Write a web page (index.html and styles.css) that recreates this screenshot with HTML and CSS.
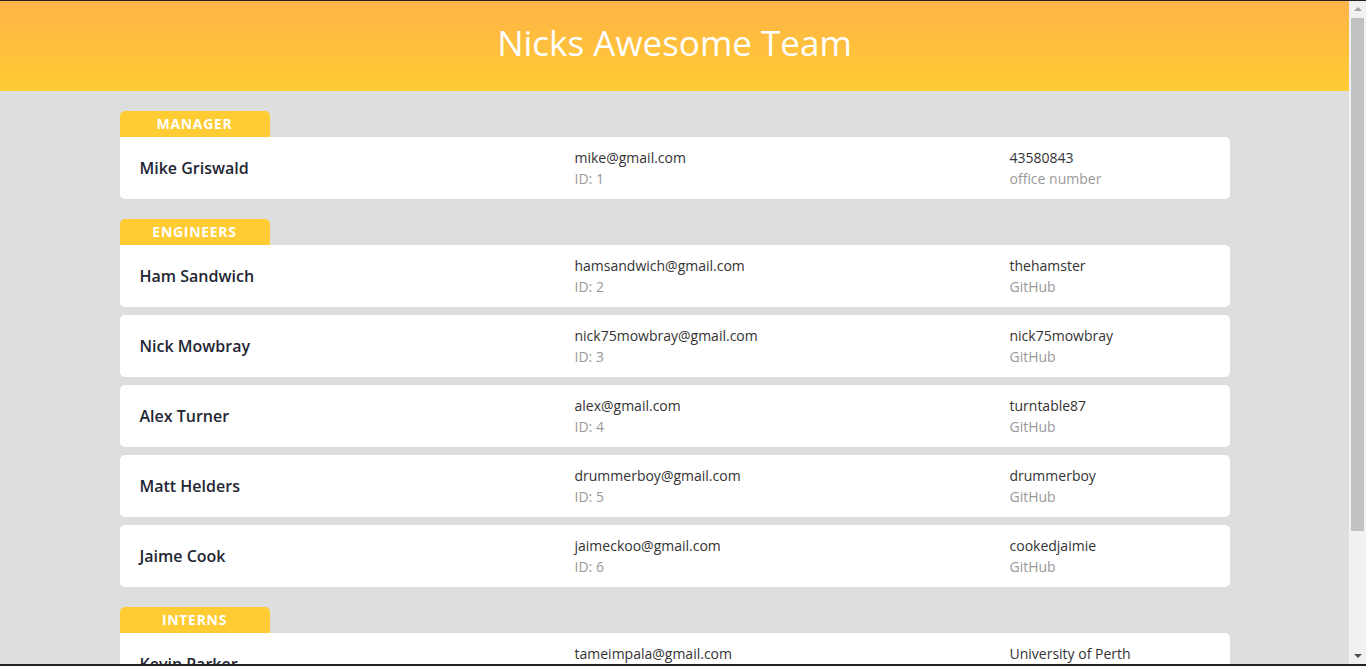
FILE: index.html
```html
<!DOCTYPE html>
<html lang="en">
<head>
<meta charset="utf-8">
<title>Nicks Awesome Team</title>
<link rel="stylesheet" href="styles.css">
</head>
<body>
<div class="frame-top"></div>
<div class="scrollbar">
  <div class="sb-arrow sb-up"></div>
  <div class="sb-thumb"></div>
  <div class="sb-arrow sb-down"></div>
</div>
<div class="page">
  <header class="hero">
    <h1 class="hero-title">Nicks Awesome Team</h1>
  </header>
  <main class="container">
    <section class="group">
      <div class="badge">Manager</div>
      <div class="card first">
        <div class="name">Mike Griswald</div>
        <div class="col"><div class="main">mike@gmail.com</div><div class="sub">ID: 1</div></div>
        <div class="col"><div class="main">43580843</div><div class="sub">office number</div></div>
      </div>
    </section>
    <section class="group">
      <div class="badge">Engineers</div>
      <div class="card first">
        <div class="name">Ham Sandwich</div>
        <div class="col"><div class="main">hamsandwich@gmail.com</div><div class="sub">ID: 2</div></div>
        <div class="col"><div class="main">thehamster</div><div class="sub">GitHub</div></div>
      </div>
      <div class="card">
        <div class="name">Nick Mowbray</div>
        <div class="col"><div class="main">nick75mowbray@gmail.com</div><div class="sub">ID: 3</div></div>
        <div class="col"><div class="main">nick75mowbray</div><div class="sub">GitHub</div></div>
      </div>
      <div class="card">
        <div class="name">Alex Turner</div>
        <div class="col"><div class="main">alex@gmail.com</div><div class="sub">ID: 4</div></div>
        <div class="col"><div class="main">turntable87</div><div class="sub">GitHub</div></div>
      </div>
      <div class="card">
        <div class="name">Matt Helders</div>
        <div class="col"><div class="main">drummerboy@gmail.com</div><div class="sub">ID: 5</div></div>
        <div class="col"><div class="main">drummerboy</div><div class="sub">GitHub</div></div>
      </div>
      <div class="card">
        <div class="name">Jaime Cook</div>
        <div class="col"><div class="main">jaimeckoo@gmail.com</div><div class="sub">ID: 6</div></div>
        <div class="col"><div class="main">cookedjaimie</div><div class="sub">GitHub</div></div>
      </div>
    </section>
    <section class="group">
      <div class="badge">Interns</div>
      <div class="card first">
        <div class="name">Kevin Parker</div>
        <div class="col"><div class="main">tameimpala@gmail.com</div><div class="sub">ID: 7</div></div>
        <div class="col"><div class="main">University of Perth</div><div class="sub">school</div></div>
      </div>
    </section>
  </main>
</div>
<div class="frame-bottom"></div>
</body>
</html>
```

FILE: styles.css
```css
* { box-sizing: border-box; }
html, body { margin: 0; padding: 0; }
body {
  background: #dedede;
  font-family: "Open Sans", "Liberation Sans", sans-serif;
  color: #212529;
}
.frame-top {
  position: fixed; top: 0; left: 0; right: 0; height: 1px;
  background: #222; z-index: 10;
}
.frame-bottom {
  position: fixed; bottom: 0; left: 0; right: 0; height: 2px;
  background: #222; z-index: 10;
}
.scrollbar {
  position: fixed; top: 1px; right: 0; bottom: 2px; width: 17px;
  background: #f1f1f1; z-index: 9;
  display: flex; flex-direction: column; align-items: center;
}
.sb-arrow {
  width: 0; height: 0;
  border-left: 4px solid transparent;
  border-right: 4px solid transparent;
}
.sb-up { border-bottom: 4px solid #a3a3a3; margin-top: 6px; }
.sb-down { border-top: 4px solid #505050; margin-top: auto; margin-bottom: 6px; }
.sb-thumb {
  width: 13px; height: 513px; margin-top: 7px;
  background: #c1c1c1;
}
.page { margin-right: 17px; }
.hero {
  height: 91px;
  padding-top: 1px;
  padding-bottom: 6px;
  background: linear-gradient(to bottom, #ffb347, #ffcc33);
  display: flex;
  align-items: center;
  justify-content: center;
}
.hero-title {
  margin: 0;
  color: #fff;
  font-weight: 400;
  font-size: 35px;
  line-height: 1.2;
}
.container {
  width: 1110px;
  margin: 0 auto;
  padding-top: 20px;
  padding-bottom: 40px;
}
.group { margin-bottom: 20px; }
.badge {
  width: 150px;
  height: 26px;
  background: #ffcc33;
  color: #fff;
  border-radius: 5px 5px 0 0;
  text-transform: uppercase;
  font-weight: 700;
  font-size: 14px;
  letter-spacing: 0.7px;
  text-align: center;
  line-height: 26px;
}
.card {
  background: #fff;
  border-radius: 5px;
  height: 62px;
  padding: 0 20px;
  display: grid;
  grid-template-columns: 435px 435px 1fr;
  align-items: center;
  margin-top: 8px;
}
.card.first {
  margin-top: 0;
  border-top-left-radius: 0;
}
.name {
  font-size: 16px;
  font-weight: 600;
  color: #1f2633;
}
.col { font-size: 14px; line-height: 21px; }
.main { color: #333; }
.sub { color: #999; }
```
